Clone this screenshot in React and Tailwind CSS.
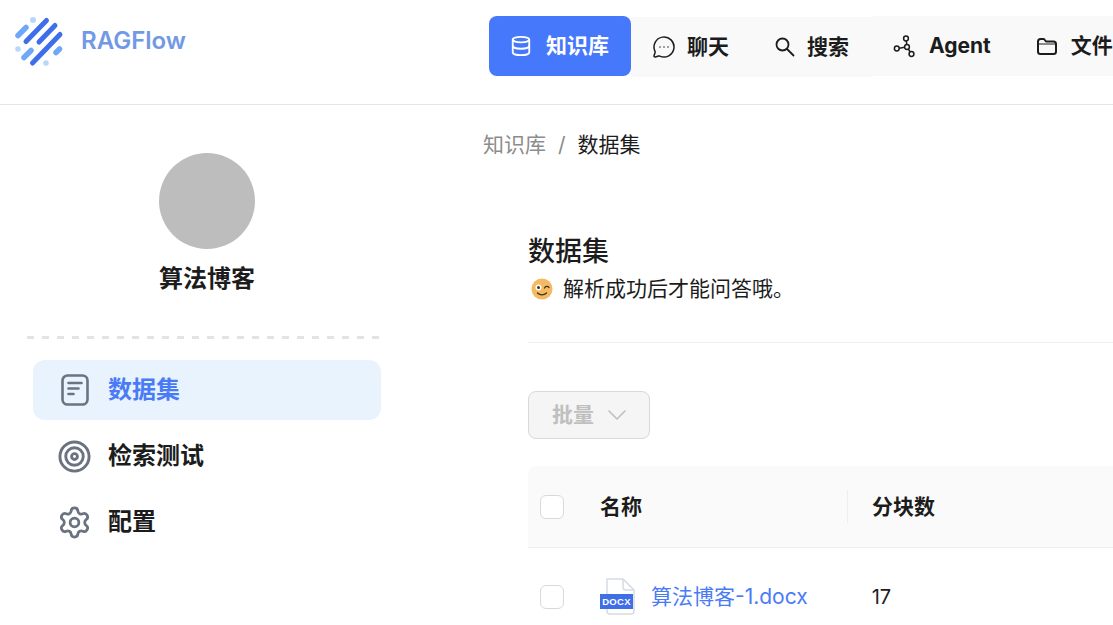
import React from "react";
import { ChevronDown, Database, MessageCircleMore, Settings, Target } from "lucide-react";

const FONT = "font-['Inter','Noto_Sans_CJK_SC',sans-serif]";

const Logo = () => (
  <svg width="52" height="52" viewBox="14 14 52 52" fill="none" strokeLinecap="round">
    <g stroke="#3f6fe8" strokeWidth="5">
      <path d="M26 40.5 46.5 19.5" />
      <path d="M39 41 55 24.5" />
      <path d="M32.5 62 60 33.5" />
    </g>
    <g stroke="#6ea9f9" strokeWidth="5.5">
      <path d="M18 34.5 26 26.5" />
      <path d="M24 56.5 31 49.5" />
      <path d="M56 51.5 59.5 48" />
    </g>
    <g fill="#b7d8fc">
      <circle cx="33" cy="19" r="3" />
      <circle cx="18" cy="48" r="2.8" />
      <circle cx="46" cy="62" r="2.8" />
    </g>
  </svg>
);

const SearchIcon = () => (
  <svg className="shrink-0" width="20" height="20" viewBox="0 0 20 20" fill="none" stroke="#1c1c1c" strokeWidth="1.8" strokeLinecap="round">
    <circle cx="7.5" cy="7.5" r="6" />
    <path d="M12 12 18.5 18.5" />
  </svg>
);

const AgentIcon = () => (
  <svg className="shrink-0" width="24" height="24" viewBox="0 0 24 24" fill="none" stroke="#1c1c1c" strokeWidth="1.5">
    <circle cx="13" cy="4.5" r="2.4" />
    <circle cx="3.8" cy="14.5" r="2.4" />
    <circle cx="14" cy="13" r="2.4" />
    <circle cx="18.5" cy="20" r="2.4" />
    <path d="M13.3 7 13.8 10.6M6.2 14.2 11.6 13.3M15.3 15 17.2 18" />
  </svg>
);

const FolderIcon = () => (
  <svg className="shrink-0" width="22" height="22" viewBox="0 0 22 22" fill="none" stroke="#1c1c1c" strokeWidth="2" strokeLinejoin="round">
    <path d="M2 6.5C2 5 3 4 4.5 4H8l2 2.5h7.5C19 6.5 20 7.5 20 9v7.5c0 1.5-1 2.5-2.5 2.5h-13C3 19 2 18 2 16.5Z" />
    <path d="M2 9h18" strokeWidth="1" />
  </svg>
);

const DocIcon = () => (
  <svg className="shrink-0" width="32" height="32" viewBox="0 0 32 32" fill="none" stroke="#6b7280" strokeWidth="2.6" strokeLinecap="round">
    <rect x="3.5" y="1.5" width="25" height="29" rx="5" />
    <path d="M9.5 9h13M9.5 14.5h10M9.5 20h5" />
  </svg>
);

const WinkIcon = () => (
  <svg className="shrink-0" width="22" height="22" viewBox="0 0 22 22" fill="none">
    <circle cx="11" cy="11" r="10.5" fill="#f5b961" />
    <circle cx="7.5" cy="9.5" r="3" fill="#fff" />
    <circle cx="7.5" cy="9.5" r="1.5" fill="#3a3226" />
    <path d="M13.5 10c1-2 3.5-2 4.5-.5" stroke="#3a3226" strokeWidth="1.3" strokeLinecap="round" />
    <path d="M6.5 15c2.5 2.5 6.5 2.5 9 0" stroke="#3a3226" strokeWidth="1.4" strokeLinecap="round" />
  </svg>
);

const DocxIcon = () => (
  <div className="relative h-[37px] w-[36px] shrink-0">
    <svg width="36" height="37" viewBox="0 0 36 37" fill="none" stroke="#d5dae3" strokeWidth="1.5" strokeLinejoin="round">
      <path d="M7 1h16l11 11v21a3 3 0 0 1-3 3H10a3 3 0 0 1-3-3Z" fill="#fff" />
      <path d="M23 1v8a3 3 0 0 0 3 3h8" />
    </svg>
    <div className="absolute left-0 top-[16px] flex h-[15px] w-[33px] items-center justify-center bg-[#3f6ee6] font-['Liberation_Sans',sans-serif] text-[9.5px] font-bold leading-none tracking-[0.3px] text-white">
      DOCX
    </div>
  </div>
);

const NavItem = ({ icon, label, className }) => (
  <div className={`flex h-[60px] shrink-0 items-center whitespace-nowrap text-[21px] font-bold text-[#1c1c1c] ${className}`}>
    {icon}
    <span>{label}</span>
  </div>
);

const SideItem = ({ icon, label, active }) => (
  <div
    className={`flex h-[60px] items-center gap-[17px] rounded-xl pl-[26px] text-2xl font-bold ${
      active ? "bg-[#e8f3fe] text-[#4a7bf7]" : "text-[#1c1c1c]"
    }`}
  >
    {icon}
    <span>{label}</span>
  </div>
);

const Checkbox = () => (
  <div className="h-6 w-6 shrink-0 rounded-[6px] border border-[#d9d9d9] bg-white" />
);

export default function App() {
  return (
    <div className={`h-screen w-screen overflow-hidden bg-white ${FONT}`}>
      <header className="flex h-[105px] border-b border-[#e5e5e5]">
        <div className="flex w-[489px] shrink-0 items-start gap-[15px] pl-[14px] pt-[15px]">
          <Logo />
          <span className="mt-[10px] text-2xl font-semibold text-[#7199e6]">RAGFlow</span>
        </div>
        <nav className="mt-4 flex h-[60px] shrink-0 items-start">
          <div className="flex h-[60px] w-[142px] items-center gap-[14px] rounded-lg bg-[#4678fb] pl-[21px] text-[21px] font-bold text-white">
            <Database size={22} strokeWidth={2} />
            <span>知识库</span>
          </div>
          <div className="mt-px flex h-[60px] w-[241px] items-center bg-[#f9f9f9]">
            <NavItem className="gap-[11px] pl-[21px]" icon={<MessageCircleMore className="shrink-0" size={24} strokeWidth={1.5} color="#1c1c1c" />} label="聊天" />
            <NavItem className="ml-[46px] gap-[12px]" icon={<SearchIcon />} label="搜索" />
          </div>
          <div className="flex h-[60px] w-[400px] items-center bg-[#f9f9f9]">
            <NavItem className="ml-[21px] gap-[12px]" icon={<AgentIcon />} label="Agent" />
            <NavItem className="ml-[45px] gap-[13px]" icon={<FolderIcon />} label="文件管理" />
          </div>
        </nav>
      </header>

      <div className="flex">
        <aside className="w-[483px] shrink-0 pl-[27px]">
          <div className="flex w-[360px] flex-col items-center pt-[48px]">
            <div className="h-24 w-24 rounded-full bg-[#bdbdbd]" />
            <div className="mt-[15px] text-2xl font-bold leading-[30px] text-[#1c1c1c]">算法博客</div>
          </div>
          <div className="mt-[42px] h-[3px] w-[352px] bg-[repeating-linear-gradient(90deg,#e3e3e3_0,#e3e3e3_7px,transparent_7px,transparent_15px)]" />
          <div className="ml-[6px] mt-[21px] flex w-[348px] flex-col gap-[6px]">
            <SideItem active icon={<DocIcon />} label="数据集" />
            <SideItem icon={<Target size={35} strokeWidth={2} color="#6b7280" className="-ml-[2px] -mr-px shrink-0" />} label="检索测试" />
            <SideItem icon={<Settings size={35} strokeWidth={1.9} color="#6b7280" className="-ml-[2px] -mr-px shrink-0" />} label="配置" />
          </div>
        </aside>

        <main className="min-w-0 flex-1">
          <div className="flex items-center gap-3 pt-[25px] text-[21px] leading-[30px]">
            <span className="text-[#8c8c8c]">知识库</span>
            <span className="text-[#8c8c8c]">/</span>
            <span className="text-[#1c1c1c]">数据集</span>
          </div>
          <div className="ml-[45px]">
            <h1 className="mt-[73px] text-[27px] font-medium leading-[38px] text-[#1c1c1c]">数据集</h1>
            <div className="mt-1 flex items-center gap-[10px] pl-[3px] text-[21px] leading-7 text-[#1c1c1c]">
              <WinkIcon />
              <span>解析成功后才能问答哦。</span>
            </div>
            <div className="mt-[39px] h-px w-full bg-[#eeeeee]" />
            <button className="mt-12 flex h-12 w-[122px] items-center gap-[7px] rounded-lg border border-[#d9d9d9] bg-[#f5f5f5] pl-[23px] text-[21px] font-bold text-[#bfbfbf]">
              <span>批量</span>
              <ChevronDown size={32} strokeWidth={1.2} />
            </button>
            <div className="mt-[27px] flex h-[82px] items-center rounded-tl-lg border-b border-[#eeeeee] bg-[#fafafa] pl-3">
              <Checkbox />
              <span className="ml-9 text-[21px] font-bold text-[#1c1c1c]">名称</span>
              <div className="ml-[205px] h-[33px] w-px bg-[#eeeeee]" />
              <span className="ml-6 text-[21px] font-bold text-[#1c1c1c]">分块数</span>
            </div>
            <div className="flex h-[97px] items-center pl-3">
              <Checkbox />
              <div className="ml-9 flex items-center gap-[15px]">
                <DocxIcon />
                <span className="text-[21px] text-[#4a7bf7]">算法博客-1.docx</span>
              </div>
              <span className="ml-[64px] text-xl text-[#1c1c1c]">17</span>
            </div>
          </div>
        </main>
      </div>
    </div>
  );
}
